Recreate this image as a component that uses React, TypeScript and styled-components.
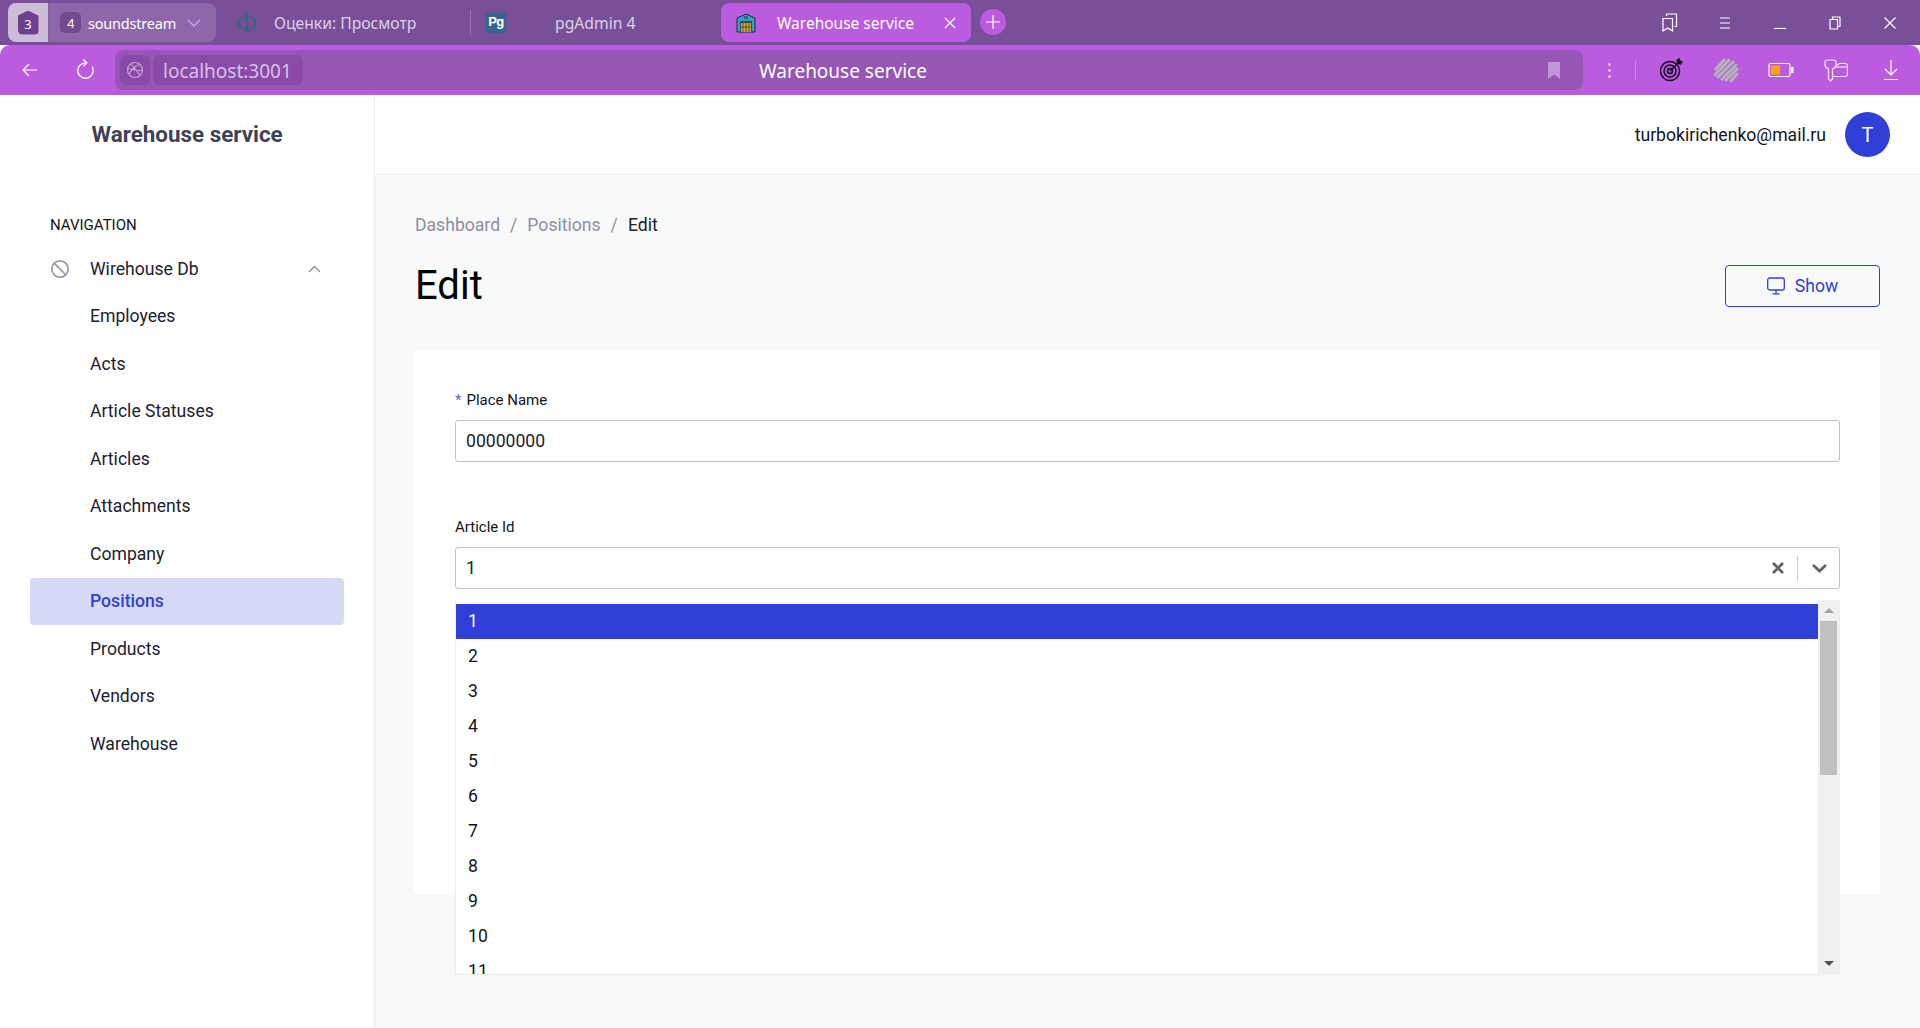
import React from 'react';
import styled, { createGlobalStyle } from 'styled-components';

const GlobalStyle = createGlobalStyle`
  html, body {
    margin: 0;
    height: 100%;
    overflow: hidden;
    background: #f8f9f9;
    font-family: Roboto, "Liberation Sans", sans-serif;
  }
  * {
    box-sizing: border-box;
  }
`;

const Page = styled.div`
  width: 1920px;
  height: 1028px;
  display: flex;
  flex-direction: column;
  overflow: hidden;
`;

/* browser chrome */
const TabStrip = styled.div`
  height: 45px;
  background: #7a4f9a;
  display: flex;
  align-items: flex-start;
  padding: 3px 0 0 8px;
  font-family: "Noto Sans", "Open Sans", sans-serif;
  color: #fff;
`;

const GroupBadge = styled.div`
  width: 40px;
  height: 39px;
  background: #cdbcd8;
  border-radius: 8px 0 0 8px;
  display: flex;
  align-items: center;
  justify-content: center;
`;

const HouseBadge = styled.div`
  width: 21px;
  height: 24px;
  background: #6e3f91;
  border-radius: 5px;
  clip-path: polygon(50% 0, 100% 22%, 100% 100%, 0 100%, 0 22%);
  font-size: 13px;
  display: flex;
  align-items: center;
  justify-content: center;
  padding-top: 2px;
`;

const GroupTab = styled.div`
  width: 168px;
  height: 39px;
  background: #8d67a9;
  border-left: 1px solid #8560a2;
  border-radius: 0 8px 8px 0;
  display: flex;
  align-items: center;
  padding-left: 11px;
  font-size: 14.5px;
  letter-spacing: -0.2px;
`;

const CountBadge = styled.span`
  width: 21px;
  height: 21px;
  border-radius: 5px;
  background: #724a92;
  font-size: 13px;
  display: flex;
  align-items: center;
  justify-content: center;
  margin-right: 7px;
`;

const GroupChevron = styled.span`
  margin-left: 11px;
  display: flex;
`;

const PlainTab = styled.div<{ $width: number }>`
  width: ${(p) => p.$width}px;
  height: 39px;
  display: flex;
  align-items: center;
  color: #dccfe6;
  font-size: 15.7px;
  white-space: nowrap;
`;

const TabDivider = styled.span`
  width: 1px;
  height: 25px;
  background: #9674b0;
  margin-left: auto;
`;

const SerifFavicon = styled.span`
  width: 19px;
  margin: 0 18px 0 21px;
  display: flex;
  justify-content: center;
  font-family: "Liberation Serif", serif;
  font-size: 28px;
  line-height: 28px;
  color: #2f6b7c;
`;

const PgFavicon = styled.span`
  width: 20px;
  height: 20px;
  margin: 0 49px 0 15px;
  background: #336791;
  border-radius: 1px;
  font-family: "Liberation Sans", sans-serif;
  font-size: 13px;
  line-height: 17px;
  font-weight: 700;
  letter-spacing: -0.5px;
  text-align: center;
  color: #fff;
`;

const ActiveTab = styled.div`
  width: 250px;
  height: 39px;
  margin-left: 3px;
  border-radius: 8px;
  background: #bb5ce0;
  display: flex;
  align-items: center;
  padding-left: 15px;
  font-size: 15.5px;
  white-space: nowrap;
`;

const TabTitle = styled.span`
  margin-left: 21px;
  flex: 1;
`;

const TabClose = styled.span`
  display: flex;
  margin-right: 15px;
`;

const NewTab = styled.div`
  width: 26px;
  height: 26px;
  margin: 6px 0 0 9px;
  border-radius: 50%;
  background: #bb5ce0;
  display: flex;
  align-items: center;
  justify-content: center;
`;

const WindowControls = styled.div`
  margin-left: auto;
  display: flex;
  align-items: center;
  height: 39px;
  padding-right: 3px;
`;

const WindowButton = styled.span`
  width: 55px;
  display: flex;
  justify-content: center;
`;

const AddressBar = styled.div`
  height: 50px;
  background: #bb5ce0;
  border-radius: 10px 10px 0 0;
  display: flex;
  align-items: center;
  padding: 0 2px 0 0;
  color: #fff;
  font-family: "Noto Sans", "Open Sans", sans-serif;
`;

const NavButton = styled.span<{ $width: number }>`
  width: ${(p) => p.$width}px;
  display: flex;
  justify-content: center;
  flex-shrink: 0;
`;

const Omnibox = styled.div`
  width: 1468px;
  height: 40px;
  background: #9556b5;
  border-radius: 8px;
  display: flex;
  align-items: center;
  position: relative;
  padding-left: 5px;
  margin: 0 6px 0 5px;
  flex-shrink: 0;
`;

const GlobeChip = styled.span`
  width: 30px;
  height: 30px;
  background: #8a4aa9;
  border-radius: 6px;
  display: flex;
  align-items: center;
  justify-content: center;
`;

const HostChip = styled.span`
  height: 30px;
  width: 150px;
  margin-left: 3px;
  background: #8a4aa9;
  border-radius: 6px;
  display: flex;
  align-items: center;
  padding: 1px 0 0 10px;
  font-size: 19px;
  color: #d8c0e2;
`;

const PageName = styled.span`
  position: absolute;
  left: 644px;
  top: 8px;
  font-size: 19px;
  line-height: 26px;
`;

const BookmarkSlot = styled.span`
  margin-left: auto;
  margin-right: 23px;
  display: flex;
`;

const ToolDots = styled.span`
  width: 40px;
  display: flex;
  justify-content: center;
  flex-shrink: 0;
`;

const ToolDivider = styled.span`
  width: 1px;
  height: 20px;
  background: #cf8bea;
  margin: 0 7px 0 6px;
  flex-shrink: 0;
`;

const ExtButton = styled.span`
  width: 55px;
  display: flex;
  justify-content: center;
  flex-shrink: 0;
`;

/* app */
const AppBody = styled.div`
  flex: 1;
  display: flex;
  min-height: 0;
`;

const Sidebar = styled.aside`
  width: 375px;
  background: #fff;
  border-right: 1px solid #eceef0;
  padding: 0 30px;
  flex-shrink: 0;
`;

const Brand = styled.div`
  height: 79px;
  padding: 0 0 2px 61.5px;
  display: flex;
  align-items: center;
  font-size: 22.4px;
  font-weight: 700;
  color: #3f4254;
`;

const NavHeading = styled.div`
  margin: 40px 0 0 20px;
  height: 22px;
  font-size: 15px;
  line-height: 22px;
  color: #12141d;
`;

const NavGroup = styled.div`
  height: 47.5px;
  margin-top: 9px;
  display: flex;
  align-items: center;
  padding-left: 20px;
  font-size: 17.6px;
  color: #1b2130;
`;

const NavGroupLabel = styled.span`
  margin-left: 20px;
  flex: 1;
`;

const NavCaret = styled.span`
  display: flex;
  margin-right: 23px;
`;

const NavItem = styled.div<{ $active?: boolean }>`
  height: 47.5px;
  display: flex;
  align-items: center;
  padding-left: 60px;
  font-size: 17.6px;
  border-radius: 4px;
  color: ${(p) => (p.$active ? '#303fd6' : '#1b2130')};
  background: ${(p) => (p.$active ? '#d6daf7' : 'transparent')};
  font-weight: ${(p) => (p.$active ? 500 : 400)};
`;

const Main = styled.div`
  flex: 1;
  display: flex;
  flex-direction: column;
  min-width: 0;
`;

const TopBar = styled.header`
  height: 80px;
  background: #fff;
  border-bottom: 1px solid #eceef0;
  display: flex;
  align-items: center;
  justify-content: flex-end;
  padding: 0 30px 0 0;
`;

const UserMail = styled.span`
  font-size: 17.6px;
  color: #12141d;
  margin-right: 19px;
`;

const Avatar = styled.span`
  width: 45px;
  height: 45px;
  border-radius: 50%;
  background: #303fd6;
  color: #fff;
  font-size: 20px;
  display: flex;
  align-items: center;
  justify-content: center;
`;

const Content = styled.main`
  flex: 1;
  position: relative;
  padding: 37px 40px 0 40px;
  background: #f8f9f9;
`;

const Breadcrumbs = styled.nav`
  display: flex;
  height: 26px;
  align-items: center;
  font-size: 17.6px;
  color: #8e8fa1;
`;

const Crumb = styled.span<{ $current?: boolean }>`
  color: ${(p) => (p.$current ? '#1b2130' : '#8e8fa1')};
`;

const CrumbSep = styled.span`
  margin: 0 10px;
`;

const TitleRow = styled.div`
  margin-top: 20px;
  height: 74px;
  display: flex;
  justify-content: space-between;
  align-items: flex-start;
`;

const PageTitle = styled.h1`
  margin: 0;
  font-size: 40px;
  line-height: 56px;
  font-weight: 400;
  color: #000;
`;

const ShowButton = styled.button`
  width: 155px;
  height: 42px;
  margin-top: 7px;
  background: transparent;
  border: 1px solid #303fd6;
  border-radius: 4px;
  color: #303fd6;
  font-family: Roboto, sans-serif;
  font-size: 17.6px;
  display: flex;
  align-items: center;
  justify-content: center;
  gap: 10px;
  padding: 0;
`;

const Card = styled.section`
  margin: 18px 0 0 -1px;
  height: 543px;
  background: #fff;
  padding: 38px 40px 0 41px;
`;

const Field = styled.div`
  height: 127px;
`;

const FieldLabel = styled.label`
  display: block;
  height: 24px;
  font-size: 15px;
  line-height: 24px;
  color: #12141d;
`;

const Required = styled.span`
  color: #5a66e0;
  margin-right: 5px;
`;

const TextBox = styled.div`
  height: 42px;
  margin-top: 8px;
  border: 1px solid #bcc2ca;
  border-radius: 3px;
  display: flex;
  align-items: center;
  padding-left: 10px;
  font-size: 17.6px;
  color: #1b2130;
`;

const SelectValue = styled.span`
  flex: 1;
`;

const SelectClear = styled.span`
  display: flex;
  margin-right: 13px;
`;

const SelectDivider = styled.span`
  width: 1px;
  height: 25px;
  background: #c9cdd2;
`;

const SelectCaret = styled.span`
  display: flex;
  margin: 0 12px 0 14px;
`;

const Dropdown = styled.div`
  position: absolute;
  left: 80px;
  top: 425px;
  width: 1385px;
  height: 375px;
  background: #fff;
  border: 1px solid #eeeeee;
  border-width: 0 1px 1px 1px;
  box-shadow: 0 0 1px rgba(0, 0, 0, 0.08);
  border-radius: 2px;
  display: flex;
  overflow: hidden;
`;

const OptionList = styled.div`
  flex: 1;
  padding-top: 4px;
  overflow: hidden;
`;

const Option = styled.div<{ $selected?: boolean }>`
  height: 35px;
  display: flex;
  align-items: center;
  padding: 0 0 2px 12px;
  font-size: 17.6px;
  color: ${(p) => (p.$selected ? '#fff' : '#12141d')};
  background: ${(p) => (p.$selected ? '#303fd6' : 'transparent')};
`;

const ScrollTrack = styled.div`
  width: 21px;
  background: #f0f0f0;
  display: flex;
  flex-direction: column;
  align-items: center;
  position: relative;
`;

const ScrollArrow = styled.span<{ $down?: boolean }>`
  position: absolute;
  ${(p) => (p.$down ? 'bottom: 8px;' : 'top: 8px;')}
  width: 0;
  height: 0;
  border-left: 5px solid transparent;
  border-right: 5px solid transparent;
  ${(p) =>
    p.$down
      ? 'border-top: 5px solid #505050;'
      : 'border-bottom: 5px solid #a3a3a3;'}
`;

const ScrollThumb = styled.div`
  width: 17px;
  height: 154px;
  margin-top: 21px;
  background: #c0c0c0;
`;

/* icons */
const Line = { fill: 'none', stroke: '#fff', strokeWidth: 1.2 } as const;

const WarehouseFavicon = () => (
  <svg width="20" height="20" viewBox="0 0 20 20">
    <path d="M1 5 10 1l9 4v14H1z" fill="#3a9cc2" stroke="#10303f" />
    <rect x="8" y="3" width="4" height="3" fill="#206a8a" />
    <rect x="4" y="8" width="12" height="11" fill="#2a5060" />
    <path d="M5 10h10v9H5z" fill="#c9a93d" />
    <path d="M7 10v9M10 10v9M13 10v9M5 14h10" stroke="#6a5416" />
  </svg>
);

const TargetIcon = () => (
  <svg width="24" height="24" viewBox="0 0 24 24" fill="none" stroke="#1a0a24" strokeWidth="1.5">
    <circle cx="11" cy="13" r="9.5" />
    <circle cx="11" cy="13" r="6" />
    <circle cx="11" cy="13" r="2.5" />
    <path d="M11 13 20 4" />
    <path d="M18 3l1 2 2 1 2-2-2-1-1-2z" fill="#1a0a24" />
  </svg>
);

const ScribbleIcon = () => (
  <svg width="26" height="26" viewBox="0 0 26 26" fill="none" stroke="#b3b3b3" strokeWidth="3" strokeLinecap="round">
    <path d="M3 12 11 3" />
    <path d="M2 18 16 3" />
    <path d="M5 20 20 5" />
    <path d="M9 22 23 8" />
    <path d="M13 23 24 12" />
    <path d="M18 24 24 17" />
  </svg>
);

const BatteryIcon = () => (
  <svg width="26" height="16" viewBox="0 0 26 16">
    <rect x="1" y="1.5" width="21" height="13" rx="1.5" fill="none" stroke="#fff" strokeWidth="1.2" />
    <rect x="3" y="3.5" width="9" height="9" fill="#ffa500" />
    <rect x="23" y="5" width="2.5" height="6" fill="#fff" />
  </svg>
);

const KeyIcon = () => (
  <svg width="24" height="23" viewBox="0 0 24 23" fill="none" stroke="#f3e6f8" strokeWidth="1.2">
    <path d="M3 1h6c2 0 3 1 3 2.500V6c0 2-1 3-3.500 4v10l-2 2-2-2V10C2 9 1 8 1 6V3c0-1 1-2 2-2z" />
    <path d="M12 6h2l1-1.500h6c1.500 0 2.500 1 2.500 2.500v8c0 1.500-1 2.500-2.500 2.500H9" />
    <path d="M12 8h11.500" />
  </svg>
);

const App: React.FC = () => {
  const navItems = [
    'Employees',
    'Acts',
    'Article Statuses',
    'Articles',
    'Attachments',
    'Company',
    'Positions',
    'Products',
    'Vendors',
    'Warehouse',
  ];
  const options = ['1', '2', '3', '4', '5', '6', '7', '8', '9', '10', '11'];

  return (
    <Page>
      <GlobalStyle />
      <TabStrip>
        <GroupBadge>
          <HouseBadge>3</HouseBadge>
        </GroupBadge>
        <GroupTab>
          <CountBadge>4</CountBadge>
          soundstream
          <GroupChevron>
            <svg width="14" height="8" viewBox="0 0 14 8" fill="none" stroke="#c4afd3" strokeWidth="1.4">
              <path d="M1 1l6 6 6-6" />
            </svg>
          </GroupChevron>
        </GroupTab>
        <PlainTab $width={255}>
          <SerifFavicon>Φ</SerifFavicon>
          Оценки: Просмотр
          <TabDivider />
        </PlainTab>
        <PlainTab $width={247}>
          <PgFavicon>Pg</PgFavicon>
          pgAdmin 4
        </PlainTab>
        <ActiveTab>
          <WarehouseFavicon />
          <TabTitle>Warehouse service</TabTitle>
          <TabClose>
            <svg width="12" height="12" viewBox="0 0 12 12" {...Line}>
              <path d="M1 1l10 10M11 1 1 11" />
            </svg>
          </TabClose>
        </ActiveTab>
        <NewTab>
          <svg width="14" height="14" viewBox="0 0 14 14" {...Line}>
            <path d="M7 0v14M0 7h14" />
          </svg>
        </NewTab>
        <WindowControls>
          <WindowButton>
            <svg width="16" height="19" viewBox="0 0 16 19" {...Line}>
              <path d="M1 5.500h9.500v12.500l-4.700-3-4.800 3zM4.500 3V1h10v12.500h-2" />
            </svg>
          </WindowButton>
          <WindowButton>
            <svg width="12" height="12" viewBox="0 0 12 12" {...Line}>
              <path d="M1 1h10M1 6h10M1 11h10" />
            </svg>
          </WindowButton>
          <WindowButton>
            <svg width="12" height="12" viewBox="0 0 12 12" {...Line}>
              <path d="M0 11.500h12" />
            </svg>
          </WindowButton>
          <WindowButton>
            <svg width="12" height="14" viewBox="0 0 12 14" {...Line}>
              <path d="M1 3.500h7.500v9.500H1zM3.500 3.500V1H11v9.500H8.500" />
            </svg>
          </WindowButton>
          <WindowButton>
            <svg width="12" height="12" viewBox="0 0 12 12" {...Line}>
              <path d="M.5.500l11 11M11.500.500l-11 11" />
            </svg>
          </WindowButton>
        </WindowControls>
      </TabStrip>

      <AddressBar>
        <NavButton $width={60}>
          <svg width="16" height="14" viewBox="0 0 16 14" {...Line}>
            <path d="M15 7H1M7 1 1 7l6 6" />
          </svg>
        </NavButton>
        <NavButton $width={50}>
          <svg width="18" height="22" viewBox="0 0 16 20" {...Line}>
            <path d="M9 3.500A7 7 0 1 0 14.500 7M6.500.500l3 3-3 3" />
          </svg>
        </NavButton>
        <Omnibox>
          <GlobeChip>
            <svg width="18" height="18" viewBox="0 0 18 18" fill="none" stroke="#c8a8d8" strokeWidth="1.1">
              <circle cx="9" cy="9" r="7.500" />
              <path d="M3 13C6 8 10 4 14 3.500M5 3c3 4 7 8 9 11.500M2 7.500c4 1 9 2.500 14 2" />
            </svg>
          </GlobeChip>
          <HostChip>localhost:3001</HostChip>
          <PageName>Warehouse service</PageName>
          <BookmarkSlot>
            <svg width="12" height="17" viewBox="0 0 12 17">
              <path d="M0 0h12v17l-6-4.500L0 17z" fill="#c096d4" />
            </svg>
          </BookmarkSlot>
        </Omnibox>
        <ToolDots>
          <svg width="3" height="15" viewBox="0 0 3 15" fill="#fff">
            <rect x="0.500" y="0.500" width="2" height="2" />
            <rect x="0.500" y="6.500" width="2" height="2" />
            <rect x="0.500" y="12.500" width="2" height="2" />
          </svg>
        </ToolDots>
        <ToolDivider />
        <ExtButton>
          <TargetIcon />
        </ExtButton>
        <ExtButton>
          <ScribbleIcon />
        </ExtButton>
        <ExtButton>
          <BatteryIcon />
        </ExtButton>
        <ExtButton>
          <KeyIcon />
        </ExtButton>
        <ExtButton>
          <svg width="14" height="20" viewBox="0 0 14 20" {...Line}>
            <path d="M7 0v15M1 9l6 6 6-6M0 19.500h14" />
          </svg>
        </ExtButton>
      </AddressBar>

      <AppBody>
        <Sidebar>
          <Brand>Warehouse service</Brand>
          <NavHeading>NAVIGATION</NavHeading>
          <NavGroup>
            <svg width="20" height="20" viewBox="0 0 20 20" fill="none" stroke="#9a9aaa" strokeWidth="1.8">
              <circle cx="10" cy="10" r="8.200" />
              <path d="M4.200 4.200l11.600 11.600" />
            </svg>
            <NavGroupLabel>Wirehouse Db</NavGroupLabel>
            <NavCaret>
              <svg width="13" height="8" viewBox="0 0 13 8" fill="none" stroke="#8e8fa1" strokeWidth="1.3">
                <path d="M1 7l5.500-5.500L12 7" />
              </svg>
            </NavCaret>
          </NavGroup>
          {navItems.map((item) => (
            <NavItem key={item} $active={item === 'Positions'}>
              {item}
            </NavItem>
          ))}
        </Sidebar>

        <Main>
          <TopBar>
            <UserMail>turbokirichenko@mail.ru</UserMail>
            <Avatar>T</Avatar>
          </TopBar>
          <Content>
            <Breadcrumbs>
              <Crumb>Dashboard</Crumb>
              <CrumbSep>/</CrumbSep>
              <Crumb>Positions</Crumb>
              <CrumbSep>/</CrumbSep>
              <Crumb $current>Edit</Crumb>
            </Breadcrumbs>
            <TitleRow>
              <PageTitle>Edit</PageTitle>
              <ShowButton>
                <svg width="18" height="18" viewBox="0 0 18 18" fill="none" stroke="#303fd6" strokeWidth="1.300">
                  <rect x="0.700" y="1" width="16.600" height="12" rx="2" />
                  <path d="M9 13v3.500M5.500 16.800h7" />
                </svg>
                Show
              </ShowButton>
            </TitleRow>
            <Card>
              <Field>
                <FieldLabel>
                  <Required>*</Required>
                  Place Name
                </FieldLabel>
                <TextBox>00000000</TextBox>
              </Field>
              <Field>
                <FieldLabel>Article Id</FieldLabel>
                <TextBox>
                  <SelectValue>1</SelectValue>
                  <SelectClear>
                    <svg width="12" height="12" viewBox="0 0 12 12" fill="none" stroke="#666" strokeWidth="3">
                      <path d="M1 1l10 10M11 1 1 11" />
                    </svg>
                  </SelectClear>
                  <SelectDivider />
                  <SelectCaret>
                    <svg width="15" height="9" viewBox="0 0 15 9" fill="none" stroke="#666" strokeWidth="2.800">
                      <path d="M1 1l6.500 6L14 1" />
                    </svg>
                  </SelectCaret>
                </TextBox>
              </Field>
            </Card>
            <Dropdown>
              <OptionList>
                {options.map((option) => (
                  <Option key={option} $selected={option === '1'}>
                    {option}
                  </Option>
                ))}
              </OptionList>
              <ScrollTrack>
                <ScrollArrow />
                <ScrollThumb />
                <ScrollArrow $down />
              </ScrollTrack>
            </Dropdown>
          </Content>
        </Main>
      </AppBody>
    </Page>
  );
};

export default App;
